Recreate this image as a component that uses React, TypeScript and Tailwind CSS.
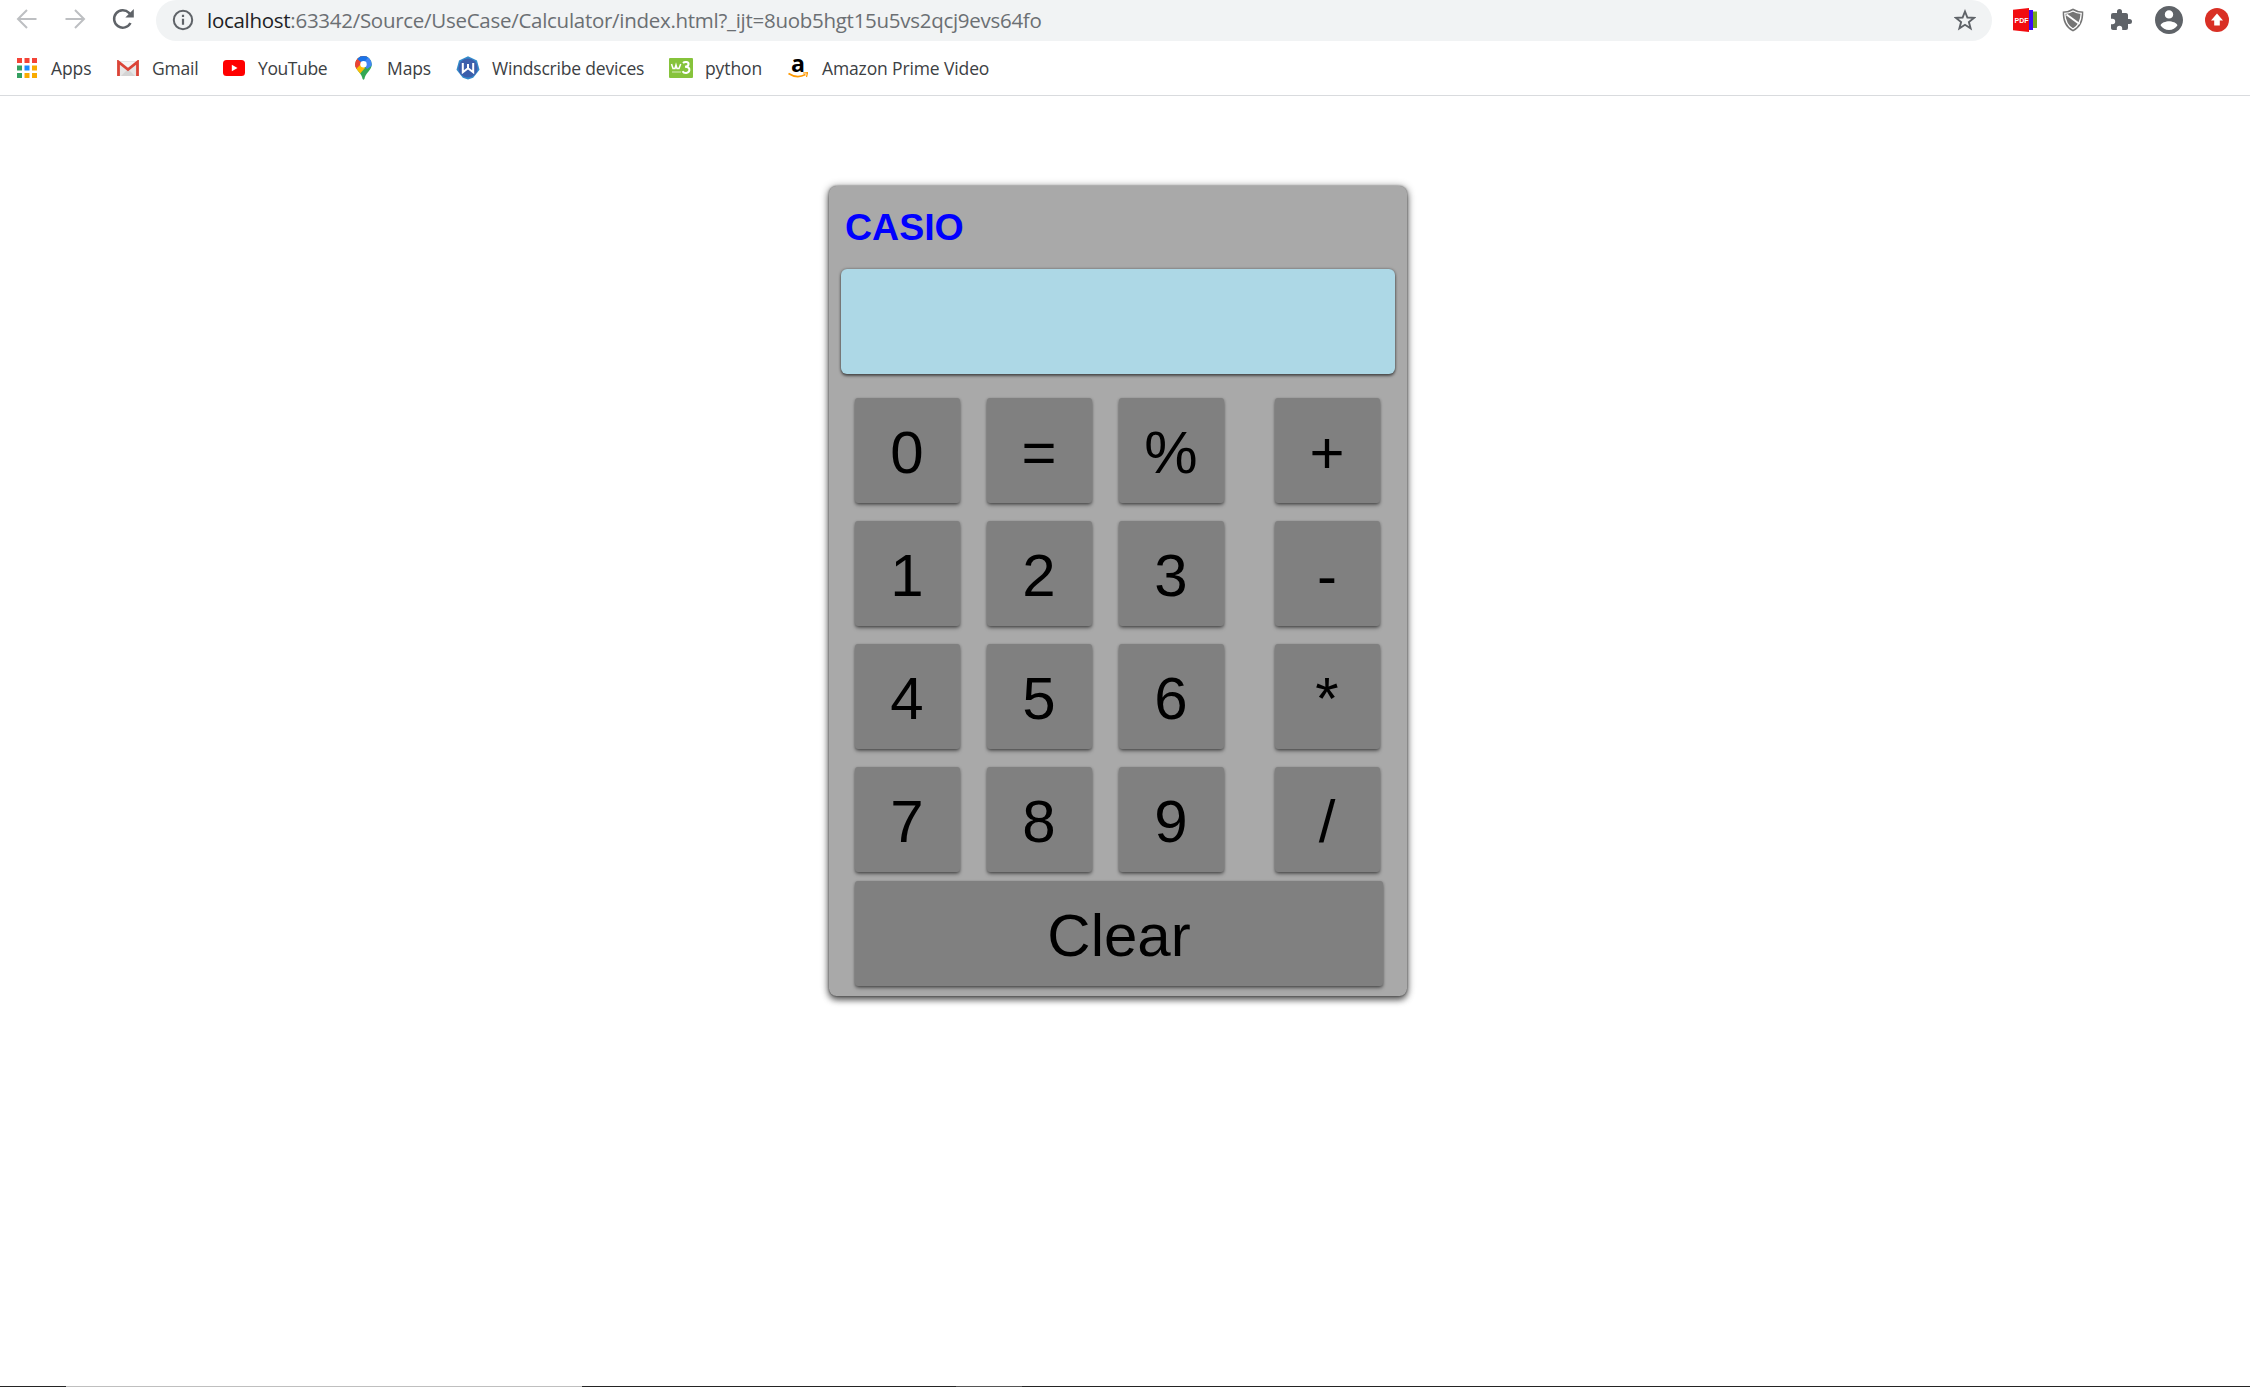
import type { ReactNode } from "react";

function Bookmark({ icon, label, box, text }: { icon: ReactNode; label: string; box: string; text: string }) {
  return (
    <div className={`flex h-full shrink-0 items-center ${box}`}>
      <span className="flex w-6 shrink-0 items-center justify-center">{icon}</span>
      <span className={`ml-3 whitespace-nowrap text-[17.5px] leading-6 text-[#3c4043] ${text}`}>{label}</span>
    </div>
  );
}

const appColors = ["#f44336", "#f44336", "#f44336", "#34a060", "#1a8cff", "#f9ab00", "#34a060", "#f9ab00", "#f9ab00"];

const AppsIcon = () => (
  <svg width="20" height="20" viewBox="0 0 20 20">
    {appColors.map((c, i) => (
      <rect key={i} x={(i % 3) * 7.5} y={Math.floor(i / 3) * 7.5} width="5" height="5" fill={c} />
    ))}
  </svg>
);

const GmailIcon = () => (
  <svg width="22" height="16" viewBox="0 0 22 16">
    <path d="M2 1h18v15H2z" fill="#e6e6e6" />
    <path d="M4 16 11 9l7 7z" fill="#d4d4d4" />
    <path d="M3 2 11 9l8-7z" fill="#f5f5f5" />
    <path d="M1.500 16V2L11 9.500 20.500 2v14" fill="none" stroke="#db4437" strokeWidth="2.800" />
  </svg>
);

const YouTubeIcon = () => (
  <svg width="22" height="16" viewBox="0 0 22 16">
    <rect width="22" height="16" rx="3.500" fill="#f00" />
    <path d="M8.800 4.700v6.600L14.500 8z" fill="#fff" />
  </svg>
);

const MapsIcon = () => (
  <svg width="17" height="24" viewBox="0 0 17 24">
    <defs>
      <clipPath id="pin">
        <path d="M8.500 0A8.300 8.300 0 0 0 .2 8.300c0 3 1.300 4.900 3.300 7.200C6 18.500 7 20 7.600 23q.9 1.600 1.800 0c.6-3 1.600-4.500 4.100-7.500 2-2.300 3.300-4.200 3.300-7.200A8.300 8.300 0 0 0 8.500 0z" />
      </clipPath>
    </defs>
    <g clipPath="url(#pin)">
      <path d="M0 0h17v24H0z" fill="#34a853" />
      <path d="M-1 16 12 0h-12z" fill="#ea4335" />
      <path d="M2 3 4-1h12l-4 5-4 4z" fill="#1a73e8" />
      <path d="M8 8 15-1l4 9-7 5z" fill="#4285f4" />
      <path d="M-1 13 6 6l4 6-7 8z" fill="#fbbc04" />
      <path d="M-1 10V0l3 3 5 4-6 6z" fill="#ea4335" />
    </g>
    <circle cx="8.500" cy="8.300" r="3.200" fill="#fff" />
  </svg>
);

const WindscribeIcon = () => (
  <svg width="24" height="24" viewBox="0 0 24 24">
    <path d="m12 .3 9 4.100 2.500 9.300-6.300 8L12 23.500l-5.200-1.800-6.300-8L3 4.400z" fill="#348bcb" />
    <circle cx="12" cy="12" r="9.600" fill="#3c5eab" />
    <path d="M6.800 7v9.200l5.200-4 5.200 4V7M12 8v4" fill="none" stroke="#fff" strokeWidth="2" />
  </svg>
);

const W3Icon = () => (
  <svg width="24" height="20" viewBox="0 0 24 20">
    <rect width="24" height="20" rx="1" fill="#86c33b" />
    <path d="m2.500 6 1.500 4.500h2L7 7l1 3.500h2L11.700 6" fill="none" stroke="#fff" strokeWidth="1.500" />
    <path d="M14 5c2-2 6-1 5.500 1.500-.2 1.500-2 2.200-3.500 2.200 3 0 4.700 1.300 4.400 3.500-.5 3.400-5.400 3.500-6.900 1" fill="none" stroke="#fff" strokeWidth="2" />
    <path d="M3 14h9" stroke="#d8ecbd" />
  </svg>
);

const AmazonIcon = () => (
  <svg width="20" height="22" viewBox="0 0 20 22">
    <text x="3" y="14.500" fontSize="24" fontWeight="700" fontFamily="Open Sans, sans-serif" textLength="14" lengthAdjust="spacingAndGlyphs">a</text>
    <path d="M.5 16.500q8.500 5.500 17 1" fill="none" stroke="#f90" strokeWidth="1.700" />
    <path d="m15 16 4.500-.3-1 4.300" fill="none" stroke="#f90" strokeWidth="1.200" />
  </svg>
);

const InfoIcon = () => (
  <svg width="22" height="22" viewBox="0 0 22 22" fill="none" stroke="#5f6368" strokeWidth="2">
    <circle cx="11" cy="11" r="9.200" />
    <path d="M11 9.800v6M11 5.800v2.200" strokeWidth="2.200" />
  </svg>
);

const PdfIcon = () => (
  <svg width="24" height="24" viewBox="0 0 24 24">
    <path d="M18 3.500h6V20h-6z" fill="#76a81d" />
    <path d="M15 2h5v20h-5z" fill="#3b0cf5" />
    <path d="M0 1.800 16 0v24L0 22.300z" fill="#f20c10" />
    <text x="1.500" y="14.500" fontSize="7" fontWeight="700" fill="#fff" fontFamily="Liberation Sans, sans-serif" textLength="14" lengthAdjust="spacingAndGlyphs">PDF</text>
  </svg>
);

const ShieldIcon = () => (
  <svg width="22" height="24" viewBox="0 0 22 24">
    <path d="M11 .5q5 3 10.300 3C21.500 13 19 19.500 11 23.500 3 19.500.5 13 .7 3.500Q6 3.500 11 .5z" fill="#757575" />
    <path d="M11 3q4 2.200 8.200 2.400C19 13 17 17.500 11 21 5 17.500 3 13 2.800 5.400 7 5.200 11 3 11 3z" fill="none" stroke="#fff" strokeWidth="1.300" />
    <path d="m4.500 6.500 13 9.500" stroke="#fff" strokeWidth="2" />
  </svg>
);

const Toolbar = () => (
  <div className="flex h-[41px] items-start">
    <div className="flex h-[38px] w-[156px] shrink-0 items-center pl-4">
      <svg width="22" height="22" viewBox="0 0 22 22" fill="none" stroke="#bdbfc2" strokeWidth="2">
        <path d="M20.500 11H3M11 2 2 11l9 9" />
      </svg>
      <svg className="ml-[26px]" width="22" height="22" viewBox="0 0 22 22" fill="none" stroke="#bdbfc2" strokeWidth="2">
        <path d="M1.500 11H19M11 2l9 9-9 9" />
      </svg>
      <svg className="ml-[26px]" width="22" height="22" viewBox="0 0 22 22">
        <path d="M18.500 15A8.700 8.700 0 1 1 17 4.800L19 7" fill="none" stroke="#5f6368" strokeWidth="2.500" />
        <path d="M21.800 1v8.500h-8.500z" fill="#5f6368" />
      </svg>
    </div>
    <div className="flex h-[41px] w-[1836px] shrink-0 items-start rounded-[21px] bg-[#f1f3f4] pl-4">
      <span className="mt-[9px]"><InfoIcon /></span>
      <span className="mt-[6px] ml-[13px] whitespace-nowrap text-[20.5px] leading-7 tracking-[-0.28px] text-[#6b6f73]">
        <span className="text-[#202124]">localhost</span>:63342/Source/UseCase/Calculator/index.html?_ijt=8uob5hgt15u5vs2qcj9evs64fo
      </span>
      <svg className="mt-[9px] mr-4 ml-auto" width="22" height="22" viewBox="0 0 22 22">
        <path d="m11 2.500 2.400 6 6.500.4-5 4.100 1.700 6.300L11 15.800l-5.600 3.500L7.100 13l-5-4.100 6.500-.4z" fill="none" stroke="#5f6368" strokeWidth="1.900" />
      </svg>
    </div>
    <div className="flex h-[40px] items-center">
      <span className="ml-[21px]"><PdfIcon /></span>
      <span className="ml-[25px]"><ShieldIcon /></span>
      <svg className="ml-[25px]" width="24" height="24" viewBox="0 0 24 24" fill="#5f6368">
        <path d="M20.500 11H19V7c0-1.100-.9-2-2-2h-4V3.500a2.500 2.500 0 0 0-5 0V5H4a2 2 0 0 0-2 2v3.800h1.500a2.700 2.700 0 0 1 0 5.400H2V20c0 1.100.9 2 2 2h3.800v-1.500a2.700 2.700 0 0 1 5.400 0V22H17a2 2 0 0 0 2-2v-4h1.500a2.500 2.500 0 0 0 0-5z" />
      </svg>
      <svg className="ml-[22px]" width="28" height="28" viewBox="2 2 20 20" fill="#5f6368">
        <path d="M12 2C6.480 2 2 6.480 2 12s4.480 10 10 10 10-4.480 10-10S17.520 2 12 2zm0 3c1.660 0 3 1.340 3 3s-1.340 3-3 3-3-1.340-3-3 1.340-3 3-3zm0 14.200c-2.500 0-4.710-1.280-6-3.220.03-1.990 4-3.080 6-3.080 1.990 0 5.970 1.090 6 3.080-1.290 1.940-3.500 3.220-6 3.220z" />
      </svg>
      <svg className="ml-[22px]" width="24" height="24" viewBox="0 0 24 24">
        <circle cx="12" cy="12" r="12" fill="#d93025" />
        <path d="m12 5.500 6 7h-3.200v5H9.200v-5H6z" fill="#fff" />
      </svg>
    </div>
  </div>
);

const keyShadow = "shadow-[0_3px_4px_-1px_rgba(0,0,0,0.35),0_1px_3px_rgba(0,0,0,0.4)]";

const Key = ({ label, extra = "" }: { label: string; extra?: string }) => (
  <button className={`flex h-[105px] w-[105px] items-center justify-center rounded-[3px] bg-[#808080] pt-[5px] pr-px text-[60px] leading-none text-black ${keyShadow} ${extra}`}>
    {label}
  </button>
);

const rows = [
  ["0", "=", "%", "+"],
  ["1", "2", "3", "-"],
  ["4", "5", "6", "*"],
  ["7", "8", "9", "/"],
];

const Calculator = () => (
  <main className="ml-[829px] h-[810px] w-[578px] rounded-[7.5px] bg-[#a9a9a9] pt-[22px] font-['Liberation_Sans',Arial,sans-serif] shadow-[0_4px_6px_rgba(0,0,0,0.5),0_1px_8px_rgba(0,0,0,0.45),0_0_2px_rgba(0,0,0,0.5)]">
    <h1 className="ml-4 h-[61px] text-[37.5px] leading-[38px] font-bold text-[#0000ff]">CASIO</h1>
    <div className="ml-3 h-[105px] w-[554px] rounded-[6px] bg-[#add8e6] shadow-[0_2px_3px_rgba(0,0,0,0.5),0_0_3px_rgba(0,0,0,0.4)]" />
    <div className="mt-6 ml-[26px] flex flex-col gap-[18px]">
      {rows.map((row) => (
        <div key={row[0]} className="flex gap-[27px]">
          {row.map((k, i) => (
            <Key key={k} label={k} extra={i === 3 ? "ml-6" : ""} />
          ))}
        </div>
      ))}
    </div>
    <button className={`mt-[9px] ml-[26px] flex h-[105px] w-[528px] items-center justify-center rounded-[3px] bg-[#808080] pt-[5px] text-[60px] leading-none text-black ${keyShadow}`}>
      Clear
    </button>
  </main>
);

export default function App() {
  return (
    <div className="flex h-[1387px] w-[2250px] flex-col overflow-hidden bg-white font-['Open_Sans','Noto_Sans',sans-serif]">
      <header className="h-[96px] shrink-0 border-b border-[#d9dbde]">
        <Toolbar />
        <nav className="flex h-[53px] items-center pl-[15px]">
          <Bookmark icon={<AppsIcon />} label="Apps" box="w-[101px]" text="tracking-[-0.1px]" />
          <Bookmark icon={<GmailIcon />} label="Gmail" box="w-[106px]" text="tracking-[-0.2px]" />
          <Bookmark icon={<YouTubeIcon />} label="YouTube" box="w-[129px]" text="tracking-[-0.4px]" />
          <Bookmark icon={<MapsIcon />} label="Maps" box="w-[105px]" text="tracking-[-0.1px]" />
          <Bookmark icon={<WindscribeIcon />} label="Windscribe devices" box="w-[213px]" text="tracking-[-0.19px]" />
          <Bookmark icon={<W3Icon />} label="python" box="w-[117px]" text="tracking-[-0.1px]" />
          <Bookmark icon={<AmazonIcon />} label="Amazon Prime Video" box="" text="tracking-[-0.13px]" />
        </nav>
      </header>
      <div className="h-[90px] shrink-0" />
      <Calculator />
      <footer className="mt-auto flex h-px bg-[#242424]">
        <div className="ml-[66px] w-[516px] bg-[#bfbfbf]" />
        <div className="ml-[374px] w-[66px] bg-[#555555]" />
      </footer>
    </div>
  );
}
